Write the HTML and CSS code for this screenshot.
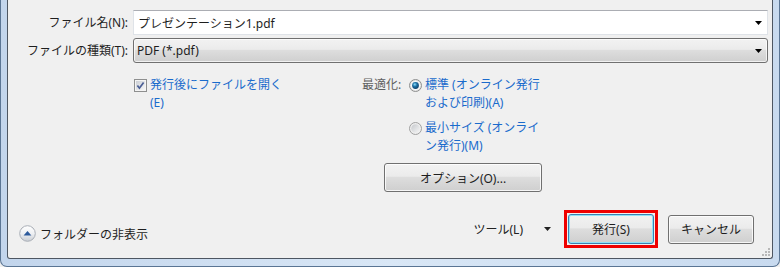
FILE: index.html
```html
<!DOCTYPE html>
<html lang="ja">
<head>
    <meta charset="UTF-8">
    <title>PDF または XPS で発行</title>
    <link rel="stylesheet" href="styles.css">
</head>
<body>
    <div class="window">
        <div class="dialog">
            <div class="fields">
                <label class="field-label">ファイル名(N):</label>
                <div class="textbox">
                    <span class="value">プレゼンテーション1.pdf</span>
                    <svg class="arrow" width="7" height="4" viewBox="0 0 7 4"><path d="M0 0H7L3.5 4Z" fill="#000"/></svg>
                </div>
                <label class="field-label">ファイルの種類(T):</label>
                <div class="combo">
                    <span class="value">PDF (*.pdf)</span>
                    <svg class="arrow" width="7" height="4" viewBox="0 0 7 4"><path d="M0 0H7L3.5 4Z" fill="#000"/></svg>
                </div>
            </div>

            <div class="options">
                <div class="open-after">
                    <svg class="checkbox" width="13" height="13" viewBox="0 0 13 13">
                        <defs>
                            <linearGradient id="cbFill" x1="0" y1="0" x2="1" y2="1">
                                <stop offset="0" stop-color="#cbcfd5"/>
                                <stop offset="1" stop-color="#f7f7f7"/>
                            </linearGradient>
                        </defs>
                        <rect x="0.5" y="0.5" width="12" height="12" fill="#f4f4f4" stroke="#8e8f8f"/>
                        <rect x="2" y="2" width="9" height="9" fill="url(#cbFill)"/>
                        <path d="M3.4 6.6L5.4 9.2L9.6 3.4" fill="none" stroke="#4a5e95" stroke-width="1.7"/>
                    </svg>
                    <span class="link-text">発行後にファイルを開く<br>(E)</span>
                </div>

                <div class="optimize">
                    <div class="optimize-row">
                        <span class="optimize-label">最適化:</span>
                        <div class="radio-list">
                            <div class="radio-item">
                                <svg class="radio" width="13" height="13" viewBox="0 0 13 13">
                                    <defs>
                                        <radialGradient id="dotOn" cx="0.4" cy="0.35" r="0.7">
                                            <stop offset="0" stop-color="#8fe0ff"/>
                                            <stop offset="0.45" stop-color="#1b6fa3"/>
                                            <stop offset="1" stop-color="#0f3d66"/>
                                        </radialGradient>
                                    </defs>
                                    <circle cx="6.5" cy="6.5" r="6" fill="#e6e6e6" stroke="#8e8f8f"/>
                                    <circle cx="6.5" cy="6.5" r="4.6" fill="#fafafa"/>
                                    <circle cx="6.5" cy="6.5" r="3.4" fill="url(#dotOn)"/>
                                </svg>
                                <span class="link-text">標準 (オンライン発行<br>および印刷)(A)</span>
                            </div>
                            <div class="radio-item">
                                <svg class="radio" width="13" height="13" viewBox="0 0 13 13">
                                    <defs>
                                        <linearGradient id="dotOff" x1="0" y1="0" x2="1" y2="1">
                                            <stop offset="0" stop-color="#c6c9cd"/>
                                            <stop offset="1" stop-color="#f6f6f6"/>
                                        </linearGradient>
                                    </defs>
                                    <circle cx="6.5" cy="6.5" r="6" fill="#eeeeee" stroke="#a0a0a0"/>
                                    <circle cx="6.5" cy="6.5" r="4.3" fill="url(#dotOff)"/>
                                </svg>
                                <span class="link-text">最小サイズ (オンライ<br>ン発行)(M)</span>
                            </div>
                        </div>
                    </div>
                    <button class="btn options-btn">オプション(O)...</button>
                </div>
            </div>

            <div class="footer">
                <div class="folder-toggle">
                    <svg class="toggle-icon" width="17" height="17" viewBox="0 0 17 17">
                        <defs>
                            <linearGradient id="toggleFill" x1="0" y1="0" x2="0" y2="1">
                                <stop offset="0" stop-color="#ffffff"/>
                                <stop offset="0.5" stop-color="#eef0f3"/>
                                <stop offset="1" stop-color="#c9cdd3"/>
                            </linearGradient>
                        </defs>
                        <circle cx="8.5" cy="8.5" r="7.8" fill="url(#toggleFill)" stroke="#a9aeb6"/>
                        <path d="M4.6 10.4H12.4L8.5 6Z" fill="#2c5a9c"/>
                    </svg>
                    <span>フォルダーの非表示</span>
                </div>

                <div class="tools">
                    <span>ツール(L)</span>
                    <svg width="7" height="4" viewBox="0 0 7 4"><path d="M0 0H7L3.5 4Z" fill="#222"/></svg>
                </div>

                <span class="highlight">
                    <button class="btn btn-default">発行(S)</button>
                </span>
                <button class="btn cancel-btn">キャンセル</button>
            </div>

            <svg class="grip" width="9" height="9" viewBox="0 0 9 9">
                <g fill="#b8b8b8">
                    <rect x="7" y="1" width="2" height="2"/>
                    <rect x="4" y="4" width="2" height="2"/>
                    <rect x="7" y="4" width="2" height="2"/>
                    <rect x="1" y="7" width="2" height="2"/>
                    <rect x="4" y="7" width="2" height="2"/>
                    <rect x="7" y="7" width="2" height="2"/>
                </g>
            </svg>
        </div>
    </div>
</body>
</html>
```

FILE: styles.css
```css
* {
    margin: 0;
    padding: 0;
    box-sizing: border-box;
}

body {
    font-family: "Noto Sans", "Noto Sans CJK JP", sans-serif;
    font-size: 12px;
    color: #1e1e1e;
    background: #f0f0f0;
}

.window {
    width: 780px;
    height: 267px;
    padding: 0 6px 7px;
    background: linear-gradient(to right, #c2d5ec, #d9e7f6 50%, #c8daef);
    border: 1px solid #5a7594;
    border-top: none;
    border-radius: 0 0 7px 7px;
}

.dialog {
    position: relative;
    height: 259px;
    background: #f0f0f0;
    border: 1px solid #4d5662;
    border-top: none;
    border-radius: 0 0 3px 3px;
}

/* file name / type rows */
.fields {
    display: grid;
    grid-template-columns: 120px 1fr;
    column-gap: 5px;
    row-gap: 3px;
    padding: 10px 4px 0 0;
}

.field-label {
    text-align: right;
    line-height: 25px;
}

.textbox,
.combo {
    height: 25px;
    display: flex;
    align-items: center;
    justify-content: space-between;
    padding: 0 4px 0 4px;
}

.textbox {
    background: #fff;
    border: 1px solid #dfe3e8;
    border-top-color: #abadb3;
}

.combo {
    border: 1px solid #707070;
    border-radius: 3px;
    background: linear-gradient(#f2f2f2, #ebebeb 45%, #dddddd 50%, #cfcfcf);
    box-shadow: inset 0 0 0 1px rgba(255, 255, 255, 0.7);
    padding-left: 3px;
}

.arrow {
    margin-right: 1px;
}

/* options area */
.options {
    display: flex;
    align-items: flex-start;
    margin-top: 13px;
    padding-left: 126px;
}

.open-after {
    width: 228px;
    display: flex;
    align-items: flex-start;
    gap: 3px;
}

.checkbox,
.radio {
    flex-shrink: 0;
    margin-top: 3px;
}

.link-text {
    color: #1a6bcc;
    line-height: 18px;
}

.optimize {
    display: flex;
    flex-direction: column;
}

.optimize-row {
    display: flex;
    align-items: flex-start;
}

.optimize-label {
    width: 47px;
    line-height: 18px;
    color: #5f5f5f;
}

.radio-list {
    display: flex;
    flex-direction: column;
    gap: 7px;
}

.radio-item {
    display: flex;
    align-items: flex-start;
    gap: 3px;
}

/* buttons */
.btn {
    font-family: inherit;
    font-size: 12px;
    color: #1e1e1e;
    height: 29px;
    border: 1px solid #707070;
    border-radius: 3px;
    background: linear-gradient(#f2f2f2, #ebebeb 45%, #dddddd 50%, #cfcfcf);
    box-shadow: inset 0 0 0 1px rgba(255, 255, 255, 0.8);
    cursor: pointer;
}

.options-btn {
    width: 158px;
    margin-top: 8px;
    margin-left: 22px;
}

.footer {
    display: flex;
    align-items: center;
    height: 38px;
    margin-top: 18px;
    padding: 0 18px 0 11px;
}

.folder-toggle {
    display: flex;
    align-items: center;
    gap: 4px;
    margin-top: 9px;
}

.tools {
    margin-left: auto;
    display: flex;
    align-items: center;
    gap: 21px;
    color: #222;
}

.highlight {
    display: flex;
    margin-left: 13px;
    padding: 1px;
    border: 3px solid #ee0000;
}

.btn-default {
    width: 86px;
    height: 30px;
    border-color: #3c7fb1;
    box-shadow: inset 0 0 0 1px #8ee3f8;
}

.cancel-btn {
    width: 86px;
    margin-left: 10px;
}

.grip {
    position: absolute;
    right: 2px;
    bottom: 2px;
}
```
